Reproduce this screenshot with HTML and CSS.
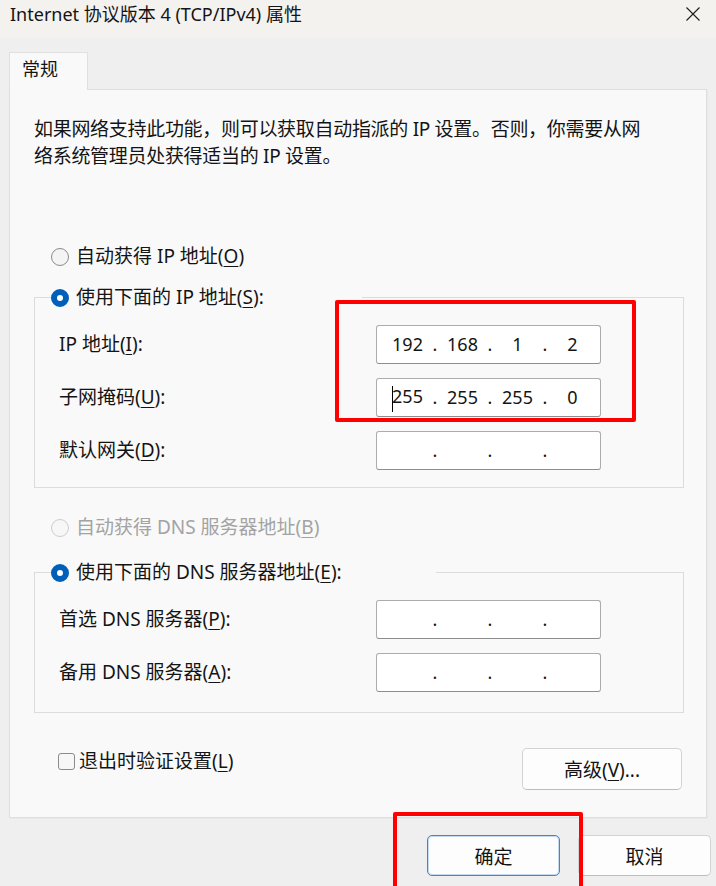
FILE: index.html
```html
<!DOCTYPE html>
<html lang="zh-CN">
<head>
    <meta charset="UTF-8">
    <meta name="viewport" content="width=device-width, initial-scale=1.0">
    <title>Internet 协议版本 4 (TCP/IPv4) 属性</title>
    <link rel="stylesheet" href="styles.css">
</head>
<body>
    <div class="titlebar">
        <span class="title">Internet 协议版本 4 (TCP/IPv4) 属性</span>
        <svg class="close" width="14" height="14" viewBox="0 0 14 14">
            <path d="M0.5 0.5 L13.5 13.5 M13.5 0.5 L0.5 13.5" stroke="#1c1c1c" stroke-width="1.1" fill="none"/>
        </svg>
    </div>

    <div class="dialog">
        <div class="tabs">
            <div class="tab">常规</div>
        </div>

        <div class="panel">
            <p class="desc">如果网络支持此功能，则可以获取自动指派的 IP 设置。否则，你需要从网<br>络系统管理员处获得适当的 IP 设置。</p>

            <div class="radio-row"><span class="radio"></span>自动获得 IP 地址(<u>O</u>)</div>

            <fieldset class="group group-ip">
                <legend class="legend legend-ip"><span class="radio checked"></span>使用下面的 IP 地址(<u>S</u>):</legend>
                <div class="fields">
                    <div class="field-label">IP 地址(<u>I</u>):</div>
                    <div class="ip">
                        <span class="oct">192</span><span class="dot">.</span><span class="oct">168</span><span class="dot">.</span><span class="oct">1</span><span class="dot">.</span><span class="oct">2</span>
                    </div>
                    <div class="field-label">子网掩码(<u>U</u>):</div>
                    <div class="ip">
                        <span class="oct"><span class="caret"></span>255</span><span class="dot">.</span><span class="oct">255</span><span class="dot">.</span><span class="oct">255</span><span class="dot">.</span><span class="oct">0</span>
                    </div>
                    <div class="field-label">默认网关(<u>D</u>):</div>
                    <div class="ip">
                        <span class="oct"></span><span class="dot">.</span><span class="oct"></span><span class="dot">.</span><span class="oct"></span><span class="dot">.</span><span class="oct"></span>
                    </div>
                </div>
            </fieldset>

            <div class="radio-row radio-row-dns disabled"><span class="radio"></span>自动获得 DNS 服务器地址(<u>B</u>)</div>

            <fieldset class="group group-dns">
                <legend class="legend legend-dns"><span class="radio checked"></span>使用下面的 DNS 服务器地址(<u>E</u>):</legend>
                <div class="fields fields-dns">
                    <div class="field-label">首选 DNS 服务器(<u>P</u>):</div>
                    <div class="ip">
                        <span class="oct"></span><span class="dot">.</span><span class="oct"></span><span class="dot">.</span><span class="oct"></span><span class="dot">.</span><span class="oct"></span>
                    </div>
                    <div class="field-label">备用 DNS 服务器(<u>A</u>):</div>
                    <div class="ip">
                        <span class="oct"></span><span class="dot">.</span><span class="oct"></span><span class="dot">.</span><span class="oct"></span><span class="dot">.</span><span class="oct"></span>
                    </div>
                </div>
            </fieldset>

            <div class="bottom-row">
                <div class="check-row"><span class="checkbox"></span>退出时验证设置(<u>L</u>)</div>
                <button class="btn btn-advanced">高级(<u>V</u>)...</button>
            </div>
        </div>

        <div class="footer">
            <button class="btn btn-ok">确定</button>
            <button class="btn">取消</button>
        </div>
    </div>

    <!-- red annotation boxes drawn over the dialog -->
    <div class="mark mark-ip"></div>
    <div class="mark mark-ok"></div>
</body>
</html>
```

FILE: styles.css
```css
/* Windows IPv4 properties dialog */
body {
    margin: 0;
    width: 716px;
    height: 886px;
    overflow: hidden;
    background: #efefef;
    color: #141414;
    font-family: "Noto Sans", "Noto Sans CJK SC", sans-serif;
    font-size: 19px;
    position: relative;
}

u {
    text-decoration-thickness: 1px;
    text-underline-offset: 3px;
}

.titlebar {
    height: 38px;
    box-sizing: border-box;
    background: #f3f2ef;
    display: flex;
    justify-content: space-between;
    align-items: flex-start;
    padding: 3px 16px 0 10px;
}

.title {
    font-size: 18px;
    line-height: 22px;
}

.close {
    margin-top: 4px;
}

.dialog {
    padding: 14px 9px 0 9px;
}

.tabs {
    display: flex;
}

.tab {
    box-sizing: border-box;
    width: 79px;
    height: 38px;
    margin-bottom: -1px;
    padding: 3px 0 0 12px;
    line-height: 27px;
    font-size: 18px;
    background: #f9f9f9;
    border: 1px solid #e0e0e0;
    border-bottom: none;
    position: relative;
    z-index: 1;
}

.panel {
    background: #f9f9f9;
    border: 1px solid #dedede;
    box-shadow: 1px 1px 0 #e9e9e9;
    padding-bottom: 27px;
}

.desc {
    margin: 0;
    padding: 26px 0 0 24px;
    line-height: 27px;
    letter-spacing: -0.3px;
}

.radio-row {
    display: flex;
    align-items: center;
    margin-top: 73px;
    padding-left: 41px;
    line-height: 27px;
}

.radio-row-dns {
    margin-top: 26px;
}

.disabled {
    color: #a3a3a3;
}

.radio {
    box-sizing: border-box;
    width: 18px;
    height: 18px;
    border-radius: 50%;
    border: 1px solid #8b8b8b;
    background: #f4f4f4;
    margin-right: 7px;
    flex: none;
}

.disabled .radio {
    border-color: #cdcdcd;
    background: #f7f7f7;
}

.radio.checked {
    border: 6px solid #005fb8;
    background: #fff;
}

.group {
    margin: 14px 22px 0 24px;
    padding: 0;
    border: 1px solid #dcdcdc;
    min-width: 0;
}

.group-dns {
    margin-top: 18px;
}

.legend {
    box-sizing: border-box;
    display: flex;
    align-items: center;
    margin-left: 16px;
    padding: 0;
    line-height: 27px;
}

.legend-ip {
    width: 311px;
}

.legend-dns {
    width: 385px;
}

.fields {
    display: grid;
    grid-template-columns: 317px 225px;
    row-gap: 14px;
    align-items: center;
    padding: 14px 0 17px 24px;
}

.fields-dns {
    padding-bottom: 20px;
}

.field-label {
    line-height: 27px;
}

.ip {
    box-sizing: border-box;
    height: 39px;
    background: #fff;
    border: 1px solid #acacac;
    border-bottom-color: #8d8d8d;
    border-radius: 3px;
    display: flex;
    align-items: center;
    padding-left: 7px;
    font-size: 18px;
    line-height: 27px;
}

.oct {
    width: 47px;
    text-align: center;
}

.dot {
    width: 8px;
    text-align: center;
}

.caret {
    display: inline-block;
    width: 1px;
    height: 26px;
    margin-right: -1px;
    background: #000;
    vertical-align: middle;
}

.bottom-row {
    display: flex;
    justify-content: space-between;
    align-items: flex-start;
    margin-top: 35px;
    padding: 0 24px 0 48px;
}

.check-row {
    display: flex;
    align-items: center;
    line-height: 27px;
}

.checkbox {
    box-sizing: border-box;
    width: 17px;
    height: 17px;
    border: 1px solid #8a8a8a;
    border-radius: 3px;
    background: #f7f7f7;
    margin-right: 4px;
}

.btn {
    box-sizing: border-box;
    width: 133px;
    height: 41px;
    background: #fdfdfd;
    border: 1px solid #d3d3d3;
    border-bottom-color: #bcbcbc;
    border-radius: 5px;
    font-family: inherit;
    font-size: 19px;
    color: #141414;
    padding: 0;
}

.btn-advanced {
    width: 160px;
    height: 42px;
}

.btn-ok {
    border-color: #3e88d2;
    box-shadow: inset 0 0 0 1px rgba(62, 136, 210, 0.3);
}

.footer {
    display: flex;
    justify-content: flex-end;
    gap: 18px;
    margin-right: -4px;
    padding-top: 17px;
}

.mark {
    position: absolute;
    box-sizing: border-box;
    border: 4px solid #ff0000;
    border-radius: 2px;
}

.mark-ip {
    left: 335px;
    top: 300px;
    width: 301px;
    height: 122px;
}

.mark-ok {
    left: 393px;
    top: 812px;
    width: 190px;
    height: 84px;
}
```
